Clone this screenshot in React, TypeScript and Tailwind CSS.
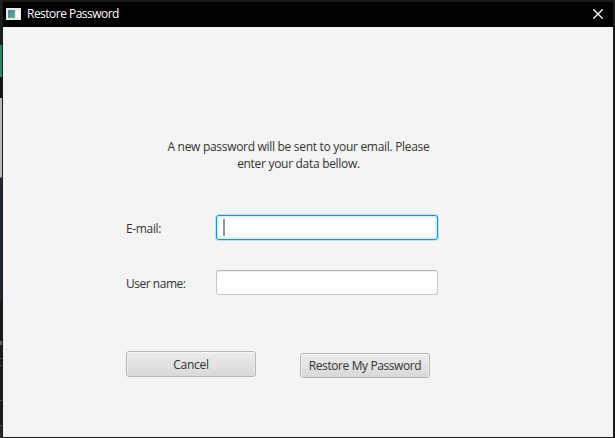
import React from 'react';

function TitleBar() {
  return (
    <header className="flex h-[25px] shrink-0 items-center bg-black pl-[3px] pr-[10px] text-white">
      <svg width="15" height="12" viewBox="0 0 15 12" className="mb-[2px] shrink-0">
        <defs>
          <linearGradient id="pane" x1="0" y1="0" x2="1" y2="1">
            <stop offset="0" stopColor="#4b7fa6" />
            <stop offset="1" stopColor="#63b58a" />
          </linearGradient>
        </defs>
        <rect width="15" height="12" fill="#e9eaeb" />
        <rect x="2" y="2" width="7" height="8" fill="url(#pane)" />
        <rect x="10" y="2" width="4" height="8" fill="#f8f8f8" />
        <rect x="11" y="1" width="1" height="1" fill="#b6cbd8" />
        <rect x="13" y="1" width="1" height="1" fill="#b6cbd8" />
      </svg>
      <h1 className="-mt-px ml-[6px] whitespace-nowrap text-[12px] leading-[16px] tracking-[-0.52px]">Restore Password</h1>
      <button aria-label="Close" className="ml-auto -mt-px">
        <svg width="10" height="10" viewBox="0 0 10 10" stroke="#fff" strokeWidth="1.3">
          <path d="M0.3 0.3 9.7 9.7M9.7 0.3 0.3 9.7" />
        </svg>
      </button>
    </header>
  );
}

function Backdrop() {
  return (
    <div className="flex w-[2px] shrink-0 flex-col bg-[#1c1c1c]">
      <div className="h-[45px] bg-[#1d1d1d]" />
      <div className="h-[32px] bg-[#2f8762]" />
      <div className="h-[21px] bg-[#121212]" />
      <div className="h-[79px] bg-[#b8b8b8]" />
      <div className="h-[1px] bg-[#686868]" />
      <div className="h-[123px] bg-[#222830]" />
      <div className="h-[40px] bg-[#1a1a1a]" />
      <div className="h-[4px] bg-[#7c613c]" />
      <div className="h-[13px]" />
      <div className="h-px bg-[#625c2b]" />
      <div className="h-[6px]" />
      <div className="h-px bg-[#625c2b]" />
      <div className="h-[34px]" />
      <div className="h-px bg-[#72504a]" />
      <div className="h-[24px]" />
      <div className="h-px bg-[#625c2b]" />
      <div className="grow bg-[#292929]" />
    </div>
  );
}

export default function App() {
  return (
    <div className="flex h-[438px] w-[615px] overflow-hidden bg-[#1b1b1b] font-['Open_Sans','Noto_Sans',sans-serif] text-[12px]">
      <Backdrop />
      <main className="ml-px mt-[2px] flex h-[435px] w-[610px] flex-col bg-[#f4f4f4] text-[#333]">
        <TitleBar />
        <p className="ml-[162px] mt-[111px] w-[267px] whitespace-nowrap text-center leading-[17px] tracking-[-0.3px]">
          A new password will be sent to your email. Please
          <br />
          enter your data bellow.
        </p>
        <div className="ml-[123px] mt-[43px] flex h-[25px] items-center">
          <label className="w-[90px] pt-[3px] tracking-[-0.35px]">E-mail:</label>
          <div className="flex h-[25px] w-[222px] items-center rounded-[3px] border border-[#039ed3] bg-white pl-[6px] shadow-[0_0_0_1px_#b9e2ef,inset_0_0_0_2px_#def1f7]">
            <div className="h-[17px] w-[2px] bg-[#969696]" />
          </div>
        </div>
        <div className="ml-[123px] mt-[30px] flex h-[25px] items-center">
          <label className="w-[90px] pt-[3px] tracking-[-0.48px]">User name:</label>
          <div className="h-[25px] w-[222px] rounded-[3px] border border-[#c8c8c8] border-t-[#b5b5b5] bg-white shadow-[inset_0_1px_0_#f0f0f0]" />
        </div>
        <div className="ml-[123px] mt-[56px] flex items-start tracking-[-0.4px]">
          <button className="h-[26px] w-[130px] rounded-[3px] border border-[#b5b5b5] bg-linear-to-b from-[#ececec] to-[#d9d9d9] pt-[2px] tracking-[-0.3px] shadow-[inset_0_1px_0_#f8f8f8,inset_1px_0_0_#eee,inset_-1px_0_0_#eee]">
            Cancel
          </button>
          <button className="ml-[44px] mt-[2px] h-[25px] w-[130px] whitespace-nowrap rounded-[3px] border border-[#b5b5b5] bg-linear-to-b from-[#ececec] to-[#d9d9d9] shadow-[inset_0_1px_0_#f8f8f8,inset_1px_0_0_#eee,inset_-1px_0_0_#eee]">
            Restore My Password
          </button>
        </div>
      </main>
    </div>
  );
}
